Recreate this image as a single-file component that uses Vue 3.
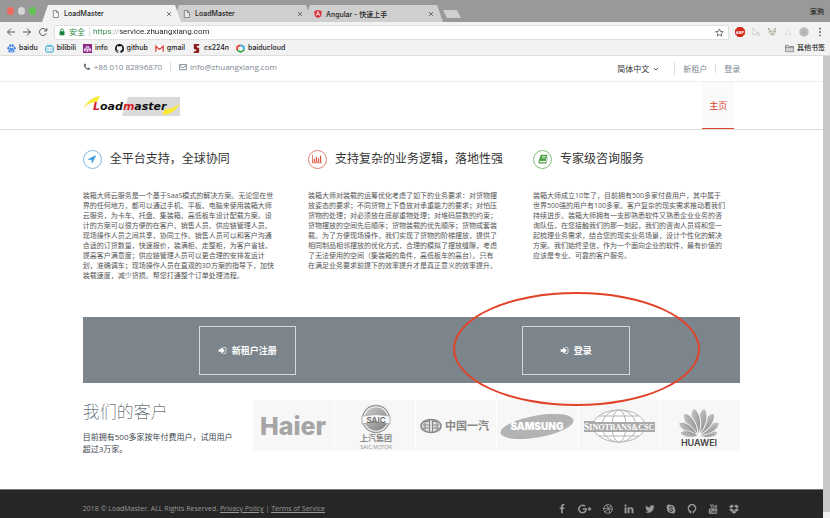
<script setup>
import { ref } from 'vue'

const address = ref('https://service.zhuangxiang.com')
const language = ref('zh')

const tabs = [
  { title: 'LoadMaster', icon: 'page', active: true },
  { title: 'LoadMaster', icon: 'page', active: false },
  { title: 'Angular - 快速上手', icon: 'angular', active: false }
]

const petals = [
  { angle: 80, size: 0.68 },
  { angle: 57, size: 0.86 },
  { angle: 33, size: 0.97 },
  { angle: 11, size: 1 },
  { angle: -11, size: 1 },
  { angle: -33, size: 0.97 },
  { angle: -57, size: 0.86 },
  { angle: -80, size: 0.68 }
]

const features = [
  {
    kind: 'arrow',
    title: '全平台支持，全球协同',
    text: `装箱大师云服务是一个基于SaaS模式的解决方案。无论您在世
界的任何地方，都可以通过手机、平板、电脑来使用装箱大师
云服务，为卡车、托盘、集装箱、高低板车设计配载方案。设
计的方案可以很方便的在客户、销售人员、供应链管理人员、
现场操作人员之间共享，协同工作。销售人员可以和客户沟通
合适的订货数量，快速报价，装满柜、走整柜，为客户省钱，
提高客户满意度；供应链管理人员可以更合理的安排发运计
划，准确调车；现场操作人员在直观的3D方案的指导下，加快
装载速度，减少货损。帮您打通整个订单处理流程。`
  },
  {
    kind: 'chart',
    title: '支持复杂的业务逻辑，落地性强',
    text: `装箱大师对装载的运筹优化考虑了如下的业务要求：对货物摆
放姿态的要求；不同货物上下叠放对承重能力的要求；对怕压
货物的处理；对必须放在底部重物处理；对堆码层数的约束；
货物摆放的空间先后顺序；货物装载的优先顺序；货物成套装
载。为了方便现场操作，我们实现了货物的阶梯摆放，提供了
相同制品相邻摆放的优化方式，合理的模拟了摆放缝隙，考虑
了无法使用的空间（集装箱的角件，高低板车的高台）。只有
在满足业务要求前提下的效率提升才是真正意义的效率提升。`
  },
  {
    kind: 'book',
    title: '专家级咨询服务',
    text: `装箱大师成立10年了，目前拥有500多家付费用户，其中属于
世界500强的用户有100多家。客户复杂的现实需求推动着我们
持续进步。装箱大师拥有一支即熟悉软件又熟悉企业业务的咨
询队伍，在您接触我们的那一刻起，我们的咨询人员将和您一
起梳理业务需求，结合您的现实业务场景，设计个性化的解决
方案。我们始终坚信，作为一个面向企业的软件，最有价值的
应该是专业、可靠的客户服务。`
  }
]
</script>

<template>
  <div class="browser">
    <div class="tabstrip">
      <div class="lights"><i class="red"></i><i class="grey"></i><i class="green"></i></div>
      <div class="tabs">
        <div v-for="(tab, i) in tabs" :key="i" class="tab" :class="{ active: tab.active }">
          <svg v-if="tab.icon === 'page'" class="fav" viewBox="0 0 8 8"><path d="M1.3.5h3.2l2 2v5H1.3zM4.4.6v2h2" fill="#fff" fill-opacity=".5" stroke="#777" stroke-width=".8" /></svg>
          <svg v-else class="fav" viewBox="0 0 8 8"><path d="M4 0l3.8 1.3-.6 4.9L4 8 .8 6.200.2 1.300z" fill="#d9303a" /><path d="M2.200 5.700L4 1.500l1.800 4.200M2.900 4.400h2.200" fill="none" stroke="#fff" stroke-width=".8" /></svg>
          <span class="tab-title">{{ tab.title }}</span>
          <button class="close" aria-label="关闭"><svg viewBox="0 0 6 6"><path d="M1 1l4 4M5 1L1 5" stroke="#555" stroke-width=".8" /></svg></button>
        </div>
      </div>
      <button class="newtab" aria-label="新标签页"></button>
      <span class="profile">家驹</span>
    </div>

    <div class="toolbar">
      <div class="nav-buttons">
        <button aria-label="后退"><svg viewBox="0 0 10 10"><path d="M9 5H1.500M5 1.500L1.500 5 5 8.500" /></svg></button>
        <button aria-label="前进"><svg viewBox="0 0 10 10"><path d="M1 5h7.500M5 1.500L8.500 5 5 8.500" /></svg></button>
        <button aria-label="刷新"><svg viewBox="0 0 10 10"><path d="M8.300 6.200A3.500 3.500 0 1 1 7.600 2.600L8.700 3.700M8.800 1.200v2.700H6.100" /></svg></button>
      </div>
      <div class="omnibox">
        <svg class="lock" viewBox="0 0 6 8"><rect x=".5" y="3.300" width="5" height="4" rx=".5" fill="#188038" /><path d="M1.600 3.500V2.300a1.400 1.400 0 0 1 2.800 0v1.200" fill="none" stroke="#188038" stroke-width=".8" /></svg>
        <span class="secure">安全</span>
        <input v-model="address" class="url" type="text" aria-label="地址" spellcheck="false">
        <svg class="star" viewBox="0 0 10 10"><path d="M5 1l1.200 2.800 3 .2-2.300 2 .7 3L5 7.400 2.400 9l.7-3L.8 4l3-.2z" fill="none" stroke="#555" stroke-width=".9" /></svg>
      </div>
      <div class="extensions">
        <svg viewBox="0 0 10 10"><path d="M3 0h4l3 3v4l-3 3H3L0 7V3z" fill="#d3281c" /><text x="5" y="6.600" text-anchor="middle" font-size="4" font-weight="700" fill="#fff">ABP</text></svg>
        <svg viewBox="0 0 10 10"><path d="M2 1v7l5-2zM6 5.500l2.500 1v2l-2 .5-1-1.500z" fill="#fafafa" stroke="#c4c4c4" stroke-width=".8" /></svg>
        <svg viewBox="0 0 10 10"><path d="M1 2l2 .7h4L9 1.500v5L6.500 9 3 8 1 5z" fill="#d8d8d0" /><path d="M1 1.500l2 1M9 1.500l-2 1M3 4.500h1.300M7 4.500h1.500M4.500 7h2" stroke="#888" stroke-width=".9" /></svg>
        <svg viewBox="0 0 10 10"><path d="M5 2l3 6H2zM2 6.500h6" fill="#fff" stroke="#d8d8d8" stroke-width=".8" /></svg>
        <svg viewBox="0 0 10 10"><circle cx="5" cy="5" r="4.700" fill="#bdbdbd" /><circle cx="5" cy="5" r="2.500" fill="#b4b4b4" /></svg>
        <button aria-label="菜单"><svg viewBox="0 0 10 10"><g fill="#555"><circle cx="5" cy="1.700" r=".9" /><circle cx="5" cy="5" r=".9" /><circle cx="5" cy="8.300" r=".9" /></g></svg></button>
      </div>
    </div>

    <div class="bookmarks">
      <a href="#"><svg viewBox="0 0 10 10"><g fill="#3b82e8"><ellipse cx="1.600" cy="4.600" rx="1.200" ry="1.500" /><ellipse cx="3.600" cy="2" rx="1.200" ry="1.600" /><ellipse cx="6.400" cy="2" rx="1.200" ry="1.600" /><ellipse cx="8.500" cy="4.600" rx="1.200" ry="1.500" /><path d="M5 4.200c1.200 0 1.700 1.500 2.800 2.300 1.300 1.200.6 3-.9 3-.8 0-1.200-.2-1.900-.2s-1.200.2-1.900.2c-1.500 0-2.200-1.800-.9-3C3.300 5.700 3.800 4.200 5 4.200z" /></g><path d="M3.600 6.400v1.600h2.800V6.400" fill="none" stroke="#fff" stroke-width=".6" /></svg>baidu</a>
      <a href="#"><svg viewBox="0 0 10 10"><path d="M3 .5l1.300 1.700M7 .5L5.700 2.200M3.300 5v1.200M6.700 5v1.200" stroke="#27a3d6" stroke-width="1" /><rect x=".8" y="2.400" width="8.400" height="6.500" rx="1.300" fill="none" stroke="#27a3d6" stroke-width="1.100" /></svg>bilibili</a>
      <a href="#"><svg viewBox="0 0 10 10"><path d="M0 0h10v10H0z" fill="#8a2a86" /><path d="M1 8V5h2V2.500h4V5h2v3H7V6H6v3H4V6H3v2z" fill="#e9d3e8" /><path d="M4 4h2v1H4z" fill="#8a2a86" /></svg>info</a>
      <a href="#"><svg viewBox="0 0 24 24"><path fill="#111" d="M12 .3C5.400.3 0 5.700 0 12.300c0 5.300 3.400 9.800 8.200 11.400.6.100.8-.3.8-.6v-2c-3.300.7-4-1.600-4-1.600-.6-1.400-1.400-1.800-1.400-1.800-1.100-.7.100-.7.100-.7 1.200.1 1.800 1.200 1.800 1.200 1.100 1.800 2.800 1.300 3.500 1 .1-.8.400-1.300.8-1.600-2.700-.3-5.500-1.300-5.500-5.900 0-1.300.5-2.400 1.200-3.200-.1-.3-.5-1.500.1-3.200 0 0 1-.3 3.300 1.200a11.500 11.500 0 0 1 6 0C17.200 5 18.200 5.300 18.200 5.300c.6 1.700.2 2.900.1 3.200.8.800 1.200 1.900 1.200 3.200 0 4.600-2.800 5.600-5.500 5.900.4.400.8 1.100.8 2.200v3.300c0 .3.200.7.800.6A12 12 0 0 0 12 .3" /></svg>github</a>
      <a href="#"><svg viewBox="0 0 10 10"><path d="M.5 1.500h9v7h-9z" fill="#fff" /><path d="M1 8.500v-6L5 6l4-3.500v6" fill="none" stroke="#d9453a" stroke-width="1.500" /></svg>gmail</a>
      <a href="#"><svg viewBox="0 0 10 10"><path d="M2.500 0H8v2H4.500v2H7l1 1v4L7 10H2V8h3.500V6H3L2 5V.5z" fill="#8c1b1b" /><path d="M4.600 0h1v10h-1z" fill="#8c1b1b" /></svg>cs224n</a>
      <a href="#"><svg viewBox="0 0 10 10"><g fill="none" stroke-width="2"><path d="M1.300 7V3L5 1.200" stroke="#e3483b" /><path d="M5 1.200L8.700 3v3" stroke="#35a4e8" /><path d="M8.700 6v1L5 8.900 1.300 7" stroke="#3dae52" /></g></svg>baiducloud</a>
      <a class="other" href="#"><svg viewBox="0 0 10 10"><path d="M.5 8.500v-7h3l1 1.200h5v5.800zM.5 4h9" fill="#d5d5d5" stroke="#666" stroke-width=".7" /></svg>其他书签</a>
    </div>

    <div class="viewport">
      <div class="page">
        <div class="topbar">
          <div class="container topbar-inner">
            <div class="contact">
              <svg viewBox="0 0 1792 1792"><path d="M1600 1240q0 27-10 70.500t-21 68.500q-21 50-122 106-94 51-186 51-27 0-53-3.500t-57.500-12.500-47-14.500-55.500-20.500-49-18q-98-35-175-83-127-79-264-216t-216-264q-48-77-83-175-3-9-18-49t-20.500-55.500-14.500-47-12.500-57.500-3.500-53q0-92 51-186 56-101 106-122 25-11 68.500-21t70.500-10q14 0 21 3 18 6 53 76 11 19 30 54t35 63.500 31 53.500q3 4 17.500 25t21.500 35.500 7 28.500q0 20-28.500 50t-62 55-62 53-28.500 46q0 9 5 22.500t8.500 20.500 14 24 11.500 19q76 137 174 235t235 174q2 1 19 11.500t24 14 20.500 8.500 22.500 5q18 0 46-28.500t53-62 55-62 50-28.500q14 0 28.500 7t35.500 21.500 25 17.500q25 15 53.500 31t63.500 35 54 30q70 35 76 53 3 7 3 21z" fill="#56616b" /></svg>
              <span>+86 010 82896870</span>
              <i class="rule"></i>
              <svg viewBox="0 0 10 10"><path d="M.8 2h8.400v6.500H.8zM1 3.300l4 3 4-3" fill="none" stroke="#56616b" stroke-width=".9" /></svg>
              <span>info@zhuangxiang.com</span>
            </div>
            <div class="account">
              <label class="lang">
                <select v-model="language" aria-label="语言"><option value="zh">简体中文</option></select>
                <svg viewBox="0 0 6 6"><path d="M1 2l2 2 2-2" fill="none" stroke="#444" stroke-width=".9" /></svg>
              </label>
              <i class="rule tall"></i>
              <a href="#">新租户</a>
              <i class="rule"></i>
              <a href="#">登录</a>
            </div>
          </div>
        </div>

        <header class="header">
          <div class="container header-inner">
            <a class="logo" href="#" aria-label="Loadmaster">
              <svg viewBox="0 0 97 20">
                <path d="M45 1h52v19H39z" fill="#dadada" />
                <path d="M0 13C4 5 10 1 17 0l-3 6C8 6 4 8 0 13z" fill="#fbe934" />
                <path d="M97 7c-3 7-10 12-18 12l3-6c6 0 11-2 15-6z" fill="#fbe934" />
                <text x="10" y="14" font-family="DejaVu Sans" font-weight="700" font-style="italic" font-size="11" fill="#111"><tspan fill="#d3222a">L</tspan>oad<tspan fill="#d3222a">m</tspan>aster</text>
              </svg>
            </a>
            <nav><a class="home" href="#">主页</a></nav>
          </div>
        </header>

        <main class="container">
          <section class="features">
            <article v-for="f in features" :key="f.kind" class="feature" :class="f.kind">
              <h2>
                <span class="badge">
                  <svg v-if="f.kind === 'arrow'" viewBox="0 0 1792 1792"><path fill="#3b9bdc" d="M1593 349l-640 1280q-17 35-57 35-5 0-15-2-22-5-35.500-22.500t-13.500-39.500v-576h-576q-22 0-39.500-13.500t-22.500-35.500 4-42 29-30l1280-640q13-7 29-7 27 0 45 19 15 14 18.500 34.500t-6.500 39.500z" /></svg>
                  <svg v-else-if="f.kind === 'chart'" viewBox="0 0 12 10"><path d="M.5 0v9.500H12" fill="none" stroke="#d9513c" /><path d="M2 5h1.500v3.500H2zM4.500 2.500H6v6H4.500zM7 4h1.500v4.500H7zM9.500 1H11v7.500H9.500z" fill="#d9513c" /></svg>
                  <svg v-else viewBox="0 0 12 12"><path d="M4 1h7.300L9.200 8.500H2.500c-.8 0-.8 1.500 0 1.500h7l2-6.500.3.800L10 11.300H2C.5 11.300.3 10 .8 8.500L3 1.800C3.200 1.200 3.500 1 4 1z" fill="#4a9e44" /><path d="M5 3h4.300M4.500 4.700h4.300" stroke="#fff" stroke-width=".8" /></svg>
                </span>
                {{ f.title }}
              </h2>
              <p>{{ f.text }}</p>
            </article>
          </section>

          <section class="cta">
            <div class="cta-cell">
              <button class="cta-btn register">
                <svg viewBox="0 0 1792 1792"><path fill="#fff" d="M1312 896q0 26-19 45l-544 544q-19 19-45 19t-45-19-19-45v-288h-448q-26 0-45-19t-19-45v-384q0-26 19-45t45-19h448v-288q0-26 19-45t45-19 45 19l544 544q19 19 19 45zm352-352v704q0 119-84.500 203.500t-203.500 84.500h-320q-32 0-32-32v-64q0-32 32-32h320q66 0 113-47t47-113v-704q0-66-47-113t-113-47h-320q-32 0-32-32v-64q0-32 32-32h320q119 0 203.500 84.500t84.500 203.500z" /></svg>
                新租户注册
              </button>
            </div>
            <div class="cta-cell">
              <button class="cta-btn login">
                <svg viewBox="0 0 1792 1792"><path fill="#fff" d="M1312 896q0 26-19 45l-544 544q-19 19-45 19t-45-19-19-45v-288h-448q-26 0-45-19t-19-45v-384q0-26 19-45t45-19h448v-288q0-26 19-45t45-19 45 19l544 544q19 19 19 45zm352-352v704q0 119-84.500 203.500t-203.500 84.500h-320q-32 0-32-32v-64q0-32 32-32h320q66 0 113-47t47-113v-704q0-66-47-113t-113-47h-320q-32 0-32-32v-64q0-32 32-32h320q119 0 203.500 84.500t84.500 203.500z" /></svg>
                登录
              </button>
              <div class="marker"></div>
            </div>
          </section>

          <section class="clients">
            <div class="clients-text">
              <h3>我们的客户</h3>
              <p>目前拥有500多家按年付费用户，试用用户超过3万家。</p>
            </div>
            <div class="brands">
              <div class="brand">
                <svg viewBox="0 0 80 50"><text x="40" y="34" text-anchor="middle" font-family="Inter" font-weight="800" font-size="25" fill="#a5a5a5">Haier</text></svg>
              </div>
              <div class="brand">
                <svg viewBox="0 0 80 50">
                  <defs><linearGradient id="ball" x1="0" x2="1" y2="1"><stop offset="0" stop-color="#ccc" /><stop offset="1" stop-color="#808080" /></linearGradient></defs>
                  <circle cx="41" cy="18" r="13.500" fill="#fff" stroke="#999" stroke-width="1.300" />
                  <circle cx="41" cy="18" r="11.800" fill="url(#ball)" />
                  <path d="M27 15q14-3 28 0v8q-14-4-28 0z" fill="#f7f7f7" stroke="#999" stroke-width=".7" />
                  <text x="41" y="22" text-anchor="middle" font-family="Inter" font-weight="600" font-size="8" fill="#666">SAIC</text>
                  <text x="41" y="40" text-anchor="middle" font-family="Noto Sans CJK SC" font-weight="700" font-size="8" fill="#888">上汽集团</text>
                  <text x="41" y="48" text-anchor="middle" font-family="Liberation Sans" font-size="5" fill="#999">SAIC MOTOR</text>
                </svg>
              </div>
              <div class="brand">
                <svg viewBox="0 0 80 50">
                  <ellipse cx="15" cy="25" rx="10" ry="6.500" fill="#ddd" stroke="#888" stroke-width="1.600" />
                  <path d="M13.500 20.500H9v9M7 24h6.500M7 27h6.500M13.500 19v12M16.500 19v12M16.500 20.500H21v9M16.500 24H23M16.500 27H23" fill="none" stroke="#888" stroke-width="1" />
                  <text x="29" y="29" font-family="Noto Sans CJK SC" font-weight="700" font-size="11" fill="#888">中国一汽</text>
                </svg>
              </div>
              <div class="brand">
                <svg viewBox="0 0 80 50">
                  <ellipse cx="40" cy="25.500" rx="37" ry="11" transform="rotate(-10 40 25.500)" fill="#b3b3b3" />
                  <text x="40" y="29" text-anchor="middle" font-family="Inter" font-weight="900" font-size="10" fill="#fff">SAMSUNG</text>
                </svg>
              </div>
              <div class="brand">
                <svg viewBox="0 0 80 50">
                  <g fill="#fff" stroke="#b3b3b3" stroke-width="1"><ellipse cx="40" cy="25" rx="26" ry="16" /><ellipse cx="40" cy="25" rx="17" ry="16" /><ellipse cx="40" cy="25" rx="7" ry="16" /><path d="M20 15h40M20 35h40" /></g>
                  <path d="M5 20h11v1h60v10H5z" fill="#aaa" />
                  <text x="40" y="29" text-anchor="middle" font-family="Liberation Serif" font-weight="700" fill="#fff" font-size="8"><tspan font-size="10">S</tspan>INOTRANS&amp;CSC</text>
                </svg>
              </div>
              <div class="brand">
                <svg viewBox="0 0 80 50">
                  <defs><linearGradient id="petal" x2="1" y2="1"><stop offset="0" stop-color="#ccc" /><stop offset="1" stop-color="#8a8a8a" /></linearGradient></defs>
                  <path v-for="p in petals" :key="p.angle" d="M0-2C-6-11-6-24 0-28 6-24 6-11 0-2z" :transform="`translate(39 35) rotate(${p.angle}) scale(${p.size})`" fill="url(#petal)" stroke="#f7f7f7" />
                  <text x="39" y="45" text-anchor="middle" font-family="Inter" font-weight="600" font-size="9" fill="#444">HUAWEI</text>
                </svg>
              </div>
            </div>
          </section>
        </main>

        <footer class="footer">
          <div class="container footer-inner">
            <p>2018 © LoadMaster. ALL Rights Reserved. <a href="#">Privacy Policy</a> | <a href="#">Terms of Service</a></p>
            <div class="social">
              <a href="#" aria-label="Facebook"><svg viewBox="0 0 1792 1792"><path d="M1343 12v264h-157q-86 0-116 36t-30 108v189h293l-39 296h-254v759h-306v-759h-255v-296h255v-218q0-186 104-288.500t277-102.500q147 0 228 12z" /></svg></a>
              <a class="wide" href="#" aria-label="Google Plus"><svg viewBox="0 0 14 10"><path d="M7 2.300A3.700 3.700 0 1 0 8.200 5H4.700M11.500 3.300v3.400M9.800 5h3.400" fill="none" stroke="#999" stroke-width="1.500" /></svg></a>
              <a href="#" aria-label="Dribbble"><svg viewBox="0 0 10 10"><g fill="none" stroke="#999" stroke-width=".9"><circle cx="5" cy="5" r="4.400" /><path d="M3.500 1C5.500 3.500 6.500 6 6.800 9M.8 4.500C4 4.600 6.800 4 8.200 2M2 8.200C3.500 5.500 6 4.500 9.300 5.300" /></g></svg></a>
              <a href="#" aria-label="LinkedIn"><svg viewBox="300 320 1190 1190"><path d="M365 1414h231v-694h-231v694zm246-908q-1-52-36-86t-93-34-94.500 34-36.500 86q0 51 35.500 85.500t92.500 34.500h1q59 0 95-34.500t36-85.500zm585 908h231v-398q0-154-73-233t-193-79q-136 0-209 117h2v-101h-231q3 66 0 694h231v-388q0-38 7-56 15-35 45-59.500t74-24.500q116 0 116 157v371z" /></svg></a>
              <a href="#" aria-label="Twitter"><svg viewBox="50 100 1692 1592"><path d="M1684 408q-67 98-162 167 1 14 1 42 0 130-38 259.500t-115.500 248.500-184.500 210.500-258 146-323 54.500q-271 0-496-145 35 4 78 4 225 0 401-138-105-2-188-64.500t-114-159.500q33 5 61 5 43 0 85-11-112-23-185.500-111.500t-73.500-205.500v-4q68 38 146 41-66-44-105-115t-39-154q0-88 44-163 121 149 294.500 238.500t371.500 99.500q-8-38-8-74 0-134 94.500-228.500t228.500-94.500q140 0 236 102 109-21 205-78-37 115-142 178 93-10 186-50z" /></svg></a>
              <a href="#" aria-label="Skype"><svg viewBox="0 0 10 10"><path d="M3 .5c.8 0 1.200.3 1.600.5A4 4 0 0 1 9 5.600c.8 1.600.2 3.900-2 3.900-.8 0-1.200-.3-1.600-.5A4 4 0 0 1 1 4.400C.2 2.800.8.500 3 .5z" /><path d="M6.700 3.500C6 2.300 3.500 2.400 3.500 3.700 3.500 5.100 6.700 4.700 6.700 6.200 6.700 7.700 3.900 7.800 3.200 6.400" fill="none" stroke="#262626" stroke-width="1" /></svg></a>
              <a href="#" aria-label="GitHub"><svg viewBox="0 0 10 10"><path d="M3.700 9.200V7.700A3.700 3.700 0 1 1 6.300 7.700v1.500M3.700 8.300c-1 .2-1.300-.2-1.700-.8" fill="none" stroke="#999" stroke-width="1.300" /><path d="M2 1.200l1.800.8L2 3.500zM8 1.200L6.200 2 8 3.500z" /></svg></a>
              <a href="#" aria-label="YouTube"><svg viewBox="0 0 10 10"><path d="M2.300 0l1.100 2.200L4.500 0M3.400 2v2M5 1.500h1v2H5zM7.400 1v2.500h1.200V1" fill="none" stroke="#999" stroke-width=".8" /><rect x=".8" y="4.600" width="8.400" height="5.200" rx="1" /><path d="M1.800 6h2M2.800 6v3M4.500 6.800v1.800h1V6.800M6.700 5.600v3h1.500V7H6.700" fill="none" stroke="#262626" stroke-width=".6" /></svg></a>
              <a href="#" aria-label="Dropbox"><svg viewBox="0 0 10 10"><path d="M3 .6l2 1.700-3 1.900L0 2.500zM7 .6L5 2.300l3 1.900 2-1.700zM0 5.800l2-1.600 3 1.900-2 1.600zM10 5.800L8 4.200 5 6.100l2 1.600zM2.200 8v-.5l.8.500 2-1.500L7 8l.8-.5V8L5 9.800z" /></svg></a>
            </div>
          </div>
        </footer>
      </div>
      <div class="scrollbar"><div class="thumb"></div></div>
    </div>
  </div>
</template>

<style>
body { margin: 0; background: #fff; }
</style>

<style scoped>
.browser { min-height: 100vh; display: flex; flex-direction: column; font-family: "Open Sans", "Noto Sans CJK SC", sans-serif; color: #333; font-size: 8px; }
.browser *, .browser { box-sizing: border-box; }
h2, h3, p { margin: 0; }
a { color: inherit; text-decoration: none; }
button { padding: 0; border: 0; background: none; font: inherit; color: inherit; }
svg { display: block; flex: none; }

.tabstrip { display: flex; align-items: flex-end; height: 22px; background: #999; font-family: "Inter", "Noto Sans CJK SC", sans-serif; font-size: 7px; color: #222; font-weight: 500; }
.lights { display: flex; gap: 4px; padding: 0 6px 7px 7px; width: 42px; }
.lights i { width: 8px; height: 8px; border-radius: 50%; }
.red { background: #ee6a5f; }
.grey { background: #d6d6d6; }
.green { background: #61c554; }
.tabs { display: flex; }
.tab { display: flex; align-items: center; width: 139px; height: 17px; padding: 0 9px 0 10px; background: #cfcfcf; clip-path: polygon(6px 0, 133px 0, 100% 100%, 0 100%); }
.tab + .tab { margin-left: -8px; }
.tab.active { background: #f2f2f2; position: relative; z-index: 1; }
.fav { width: 8px; height: 8px; margin-right: 4px; }
.tab-title { flex: 1; }
.close svg { width: 6px; height: 6px; }
.newtab { width: 18px; height: 8px; margin-bottom: 4px; background: #cfcfcf; clip-path: polygon(0 0, 14px 0, 100% 100%, 4px 100%); }
.profile { margin-left: auto; padding: 0 6px 5px 0; line-height: 10px; }

.toolbar { display: flex; align-items: center; gap: 6px; height: 20px; padding: 0 5px 0 6px; background: #f2f2f2; }
.nav-buttons { display: flex; gap: 6px; }
.nav-buttons svg { width: 10px; height: 10px; fill: none; stroke: #555; stroke-width: 1; }
.omnibox { flex: 1; display: flex; align-items: center; height: 15px; padding: 0 4px; background: #fff; border: 1px solid #e0e0e0; border-radius: 2px; }
.lock { width: 6px; height: 8px; margin-right: 4px; }
.secure { color: #2d8645; padding-right: 4px; border-right: 1px solid #ddd; line-height: 10px; }
.url { flex: 1; min-width: 0; border: 0; padding: 0 0 0 3px; outline: 0; font: 8px/14px Roboto, sans-serif; color: transparent; background: linear-gradient(90deg, #2d8645 22px, #999 22px, #999 30px, #222 30px); background-clip: text; -webkit-background-clip: text; }
.star { width: 9px; height: 9px; }
.extensions { display: flex; align-items: center; gap: 6px; }
.extensions svg { width: 10px; height: 10px; font-family: "Liberation Sans"; }

.bookmarks { display: flex; align-items: center; gap: 7px; height: 14px; padding: 0 5px 1px 7px; background: #f2f2f2; border-bottom: 1px solid #ddd; font: 500 7px/10px "Inter", "Noto Sans CJK SC", sans-serif; color: #222; }
.bookmarks a { display: flex; align-items: center; gap: 3px; }
.bookmarks svg { width: 9px; height: 9px; }
.bookmarks .other { margin-left: auto; }

.viewport { flex: 1; display: flex; }
.page { flex: 1; min-width: 0; display: flex; flex-direction: column; }
.scrollbar { width: 7px; background: #f0f0f0; padding-bottom: 6px; display: flex; }
.thumb { flex: 1; background: #c8c8c8; }
.container { width: calc(80% - 1px); margin: 0 auto; }

.topbar { border-bottom: 1px solid #eee; }
.topbar-inner { display: flex; justify-content: space-between; height: 25px; color: #7d8791; }
.contact { display: flex; align-items: center; gap: 3px; padding-bottom: 4px; }
.contact svg { width: 8px; height: 8px; }
.contact .rule { margin: 0 5px; }
.rule { width: 1px; height: 9px; margin: 0 6px; background: #ddd; }
.rule.tall { height: 13px; }
.account { display: flex; align-items: center; gap: 2px; }
.lang { display: flex; align-items: center; gap: 4px; }
.lang select { appearance: none; border: 0; padding: 0; background: none; font: inherit; color: #333; }
.lang svg { width: 6px; height: 6px; margin-right: 7px; }

.header { border-bottom: 1px solid #ddd; }
.header-inner { display: flex; justify-content: space-between; align-items: stretch; height: 47px; }
.logo { display: flex; align-items: center; }
.logo svg { width: 97px; height: 20px; }
nav { display: flex; padding-right: 6px; }
.home { display: flex; align-items: center; padding: 0 7px; background: #fafafa; border-bottom: 1px solid #e0452c; color: #d8402a; font-size: 9px; }

.features { display: grid; grid-template-columns: repeat(3, 1fr); column-gap: 18px; padding-top: 19px; height: 187px; }
.features h2 { display: flex; align-items: center; gap: 8px; font-weight: 400; font-size: 12px; line-height: 20px; white-space: nowrap; }
.badge { display: flex; align-items: center; justify-content: center; width: 19px; height: 19px; border-radius: 50%; border: 1px solid #7dbbe8; }
.badge svg { width: 10px; height: 10px; }
.chart .badge { border-color: #e08072; }
.book .badge { border-color: #7dbd78; }
.features p { margin-top: 22px; font-size: 7px; line-height: 10px; color: #555; white-space: pre; }

.cta { display: grid; grid-template-columns: 1fr 1fr; height: 66px; background: #7d858c; }
.cta-cell { position: relative; display: flex; align-items: center; justify-content: center; }
.cta-btn { display: flex; align-items: center; gap: 5px; height: 49px; padding: 0 18px; border: 1px solid #d5d9dc; color: #fff; font-weight: 700; font-size: 9px; }
.cta-btn svg { width: 9px; height: 9px; }
.login { padding: 0 37px; }
.marker { position: absolute; top: -25px; left: 42px; width: 247px; height: 114px; border: 2px solid #e2432b; border-radius: 50%; pointer-events: none; }

.clients { display: flex; justify-content: space-between; padding-top: 17px; height: 106px; }
.clients-text { width: 156px; color: #3c4650; }
.clients h3 { font-family: "Noto Sans CJK SC", sans-serif; font-weight: 100; font-size: 17px; line-height: 22px; color: #333f4b; }
.clients p { margin-top: 9px; line-height: 12px; }
.brands { flex: 0 1 487px; display: grid; grid-template-columns: repeat(6, 1fr); gap: 1px; height: 51px; }
.brand { background: #f7f7f7; display: flex; align-items: center; justify-content: center; }
.brand svg { width: 80px; height: 50px; }

.footer { flex: 1; background: #262626; border-top: 1px solid #777; color: #999; }
.footer-inner { display: flex; justify-content: space-between; align-items: center; padding-top: 10px; height: 27px; font-size: 7px; }
.footer p a { text-decoration: underline; }
.social { display: flex; align-items: center; gap: 11px; padding-right: 1px; }
.social svg { width: 10px; height: 10px; fill: #999; }
.social .wide svg { width: 14px; }
</style>
